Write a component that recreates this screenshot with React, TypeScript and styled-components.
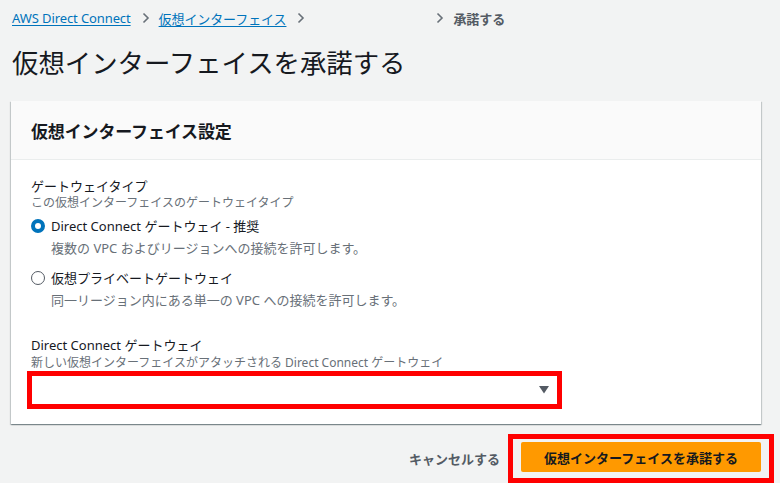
import React from "react";
import styled, { createGlobalStyle } from "styled-components";

const GlobalStyle = createGlobalStyle`
  html, body {
    margin: 0;
    padding: 0;
    background: #f2f3f3;
    font-family: "Noto Sans", "Noto Sans CJK JP", sans-serif;
    color: #16191f;
  }
`;

const Page = styled.div`
  width: 780px;
  height: 483px;
  overflow: hidden;
  padding: 0 19px 0 11px;
  box-sizing: border-box;
`;

const Breadcrumbs = styled.nav`
  display: flex;
  align-items: center;
  height: 36px;
  padding-left: 1px;
  font-size: 13px;
  letter-spacing: -0.1px;
`;

const Crumb = styled.a`
  color: #0073bb;
  text-decoration: underline;
  text-underline-offset: 2px;
`;

const CurrentCrumb = styled.span`
  color: #545b64;
  font-weight: 600;
`;

const ChevronBox = styled.span`
  display: inline-flex;
  margin: 0 9px 0 11px;
`;

const Spacer = styled.span`
  width: 111px;
`;

const Title = styled.h1`
  margin: 8px 0 0 1px;
  font-size: 26.4px;
  line-height: 38px;
  font-weight: 400;
  color: #16191f;
`;

const Card = styled.section`
  margin-top: 19px;
  background: #fff;
  box-shadow: 0 1px 1px 0 rgba(0, 28, 36, 0.3), 1px 1px 1px 0 rgba(0, 28, 36, 0.15),
    -1px 1px 1px 0 rgba(0, 28, 36, 0.15);
`;

const CardHeader = styled.header`
  height: 59px;
  display: flex;
  align-items: center;
  padding: 0 20px;
  background: #fafafa;
  border-bottom: 1px solid #eaeded;
  box-sizing: border-box;
`;

const CardTitle = styled.h2`
  margin: 0;
  font-size: 17px;
  font-weight: 700;
  letter-spacing: -0.15px;
`;

const CardBody = styled.div`
  padding: 17px 20px 15px;
`;

const Label = styled.div`
  font-size: 13px;
  line-height: 18px;
  color: #16191f;
`;

const Description = styled.div`
  font-size: 12px;
  line-height: 16px;
  color: #687078;
`;

const RadioGroup = styled.div`
  display: flex;
  flex-direction: column;
  gap: 11px;
  margin-top: 5px;
`;

const Option = styled.div``;

const RadioRow = styled.label`
  display: flex;
  align-items: center;
  gap: 6px;
  font-size: 13px;
  line-height: 20px;
`;

const RadioCircle = styled.span<{ $checked?: boolean }>`
  width: 14px;
  height: 14px;
  border-radius: 50%;
  box-sizing: border-box;
  flex: none;
  ${(p) =>
    p.$checked
      ? `border: 4px solid #0073bb; background: #fff;`
      : `border: 1px solid #545b64; background: #fff;`}
`;

const OptionDesc = styled.div`
  margin: 3px 0 0 20px;
  font-size: 13px;
  line-height: 18px;
  color: #687078;
`;

const Field = styled.div`
  margin-top: 27px;
`;

const FieldDesc = styled(Description)`
  margin-top: 1px;
`;

const Highlight = styled.div<{ $width?: string }>`
  border: 5px solid #ff0000;
  box-sizing: border-box;
  width: ${(p) => p.$width ?? "auto"};
`;

const SelectHighlight = styled(Highlight)`
  margin-left: -4px;
  height: 38px;
`;

const Select = styled.div`
  height: 100%;
  background: #fff;
  display: flex;
  align-items: center;
  justify-content: flex-end;
  padding-right: 8px;
`;

const Footer = styled.div`
  display: flex;
  justify-content: flex-end;
  align-items: center;
  gap: 8px;
  margin: 10px -13px 0 0;
`;

const CancelButton = styled.button`
  border: none;
  background: none;
  padding: 0;
  font-family: inherit;
  font-size: 13px;
  font-weight: 600;
  color: #545b64;
`;

const ButtonHighlight = styled(Highlight)`
  height: 49px;
  padding: 3px 8px 6px;
`;

const PrimaryButton = styled.button`
  width: 240px;
  height: 30px;
  border: none;
  border-radius: 2px;
  background: #ff9900;
  font-family: inherit;
  font-size: 13px;
  font-weight: 700;
  color: #16191f;
`;

const Chevron = () => (
  <ChevronBox>
    <svg width="8" height="12" viewBox="0 0 8 12">
      <path d="M1.5 1.5 L6 6 L1.5 10.5" fill="none" stroke="#687078" strokeWidth="1.6" />
    </svg>
  </ChevronBox>
);

const App = () => (
  <Page>
    <GlobalStyle />
    <Breadcrumbs>
      <Crumb>AWS Direct Connect</Crumb>
      <Chevron />
      <Crumb>仮想インターフェイス</Crumb>
      <Chevron />
      <Spacer />
      <Chevron />
      <CurrentCrumb>承諾する</CurrentCrumb>
    </Breadcrumbs>
    <Title>仮想インターフェイスを承諾する</Title>
    <Card>
      <CardHeader>
        <CardTitle>仮想インターフェイス設定</CardTitle>
      </CardHeader>
      <CardBody>
        <Label>ゲートウェイタイプ</Label>
        <Description>この仮想インターフェイスのゲートウェイタイプ</Description>
        <RadioGroup>
          <Option>
            <RadioRow>
              <RadioCircle $checked />
              Direct Connect ゲートウェイ - 推奨
            </RadioRow>
            <OptionDesc>複数の VPC およびリージョンへの接続を許可します。</OptionDesc>
          </Option>
          <Option>
            <RadioRow>
              <RadioCircle />
              仮想プライベートゲートウェイ
            </RadioRow>
            <OptionDesc>同一リージョン内にある単一の VPC への接続を許可します。</OptionDesc>
          </Option>
        </RadioGroup>
        <Field>
          <Label>Direct Connect ゲートウェイ</Label>
          <FieldDesc>新しい仮想インターフェイスがアタッチされる Direct Connect ゲートウェイ</FieldDesc>
          <SelectHighlight $width="535px">
            <Select>
              <svg width="10" height="8" viewBox="0 0 10 8">
                <path d="M0 0 H10 L5 7.5 Z" fill="#545b64" />
              </svg>
            </Select>
          </SelectHighlight>
        </Field>
      </CardBody>
    </Card>
    <Footer>
      <CancelButton>キャンセルする</CancelButton>
      <ButtonHighlight>
        <PrimaryButton>仮想インターフェイスを承諾する</PrimaryButton>
      </ButtonHighlight>
    </Footer>
  </Page>
);

export default App;
